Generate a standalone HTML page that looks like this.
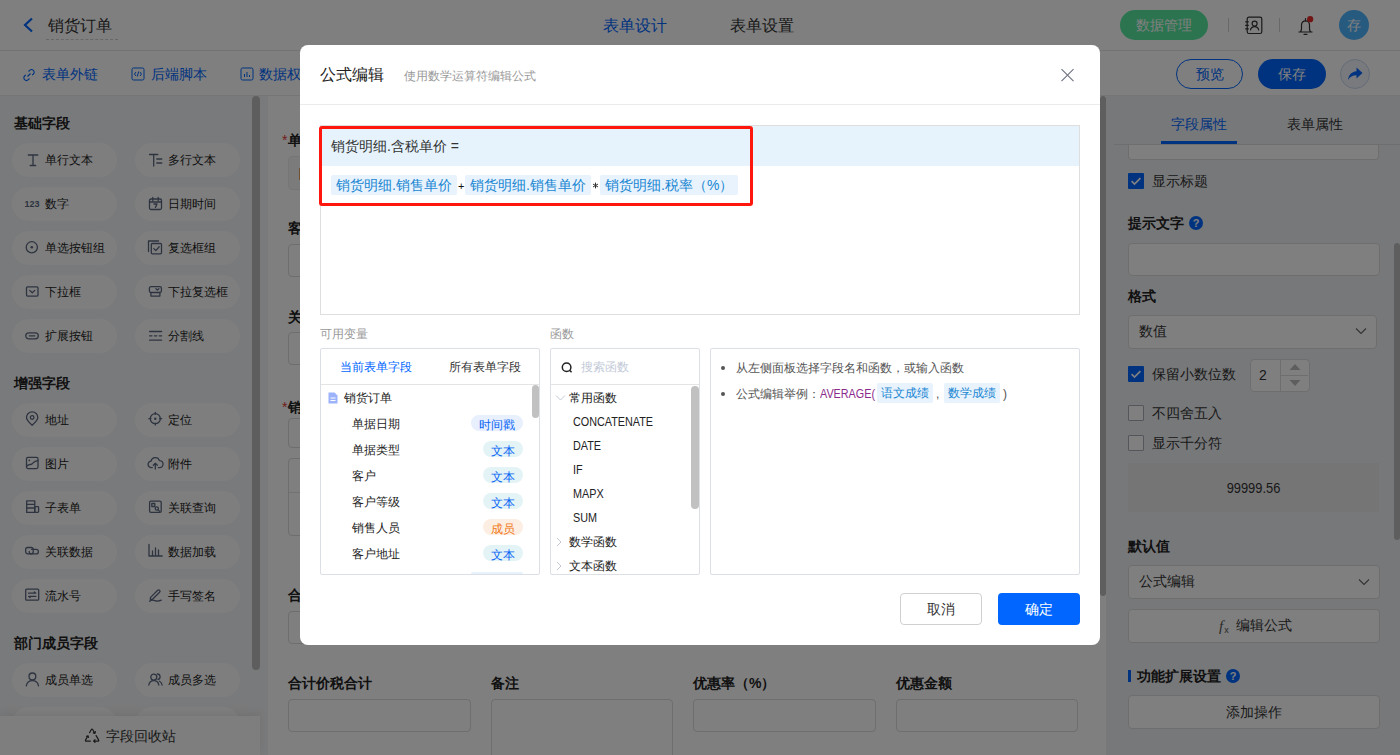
<!DOCTYPE html>
<html><head><meta charset="utf-8">
<style>
*{box-sizing:border-box;margin:0;padding:0}
html,body{width:1400px;height:755px;overflow:hidden;background:#fff;font-family:"Liberation Sans",sans-serif;color:#333}
.a{position:absolute;white-space:nowrap}
.t12{font-size:12px;line-height:16px}
.t13{font-size:13px;line-height:17px}
.t14{font-size:14px;line-height:18px}
.t16{font-size:16px;line-height:20px}
.b{font-weight:bold}
#hdr{position:absolute;left:0;top:0;width:1400px;height:51px;background:#fff;border-bottom:1px solid #e6e6e6}
#tb{position:absolute;left:0;top:51px;width:1400px;height:45px;background:#fff;border-bottom:1px solid #ececec}
#lp{position:absolute;left:0;top:96px;width:268px;height:659px;background:#f3f4f6}
#cv{position:absolute;left:268px;top:96px;width:838px;height:659px;background:#fff}
#rp{position:absolute;left:1106px;top:96px;width:294px;height:659px;background:#eff1f4}
.pill{position:absolute;width:105px;height:34px;border-radius:17px;background:#fdfdfd}
.pill svg{position:absolute;left:11px;top:7px}
.pill span{position:absolute;left:33px;top:9px;font-size:12px;line-height:16px;color:#222;white-space:nowrap}
.sec{position:absolute;left:14px;font-size:14px;line-height:18px;font-weight:bold;color:#222;white-space:nowrap}
.inp{position:absolute;border:1px solid #dcdcdc;border-radius:4px;background:#fff}
.lbl{position:absolute;font-size:14px;line-height:18px;font-weight:bold;color:#222;white-space:nowrap}
#ov{position:absolute;left:0;top:0;width:1400px;height:755px;background:rgba(0,0,0,.5)}
#md{position:absolute;left:300px;top:45px;width:800px;height:600px;background:#fff;border-radius:8px}
.tag{position:absolute;height:20px;background:#e8f3fd;color:#1886d2;font-size:14px;line-height:20px;padding:0 5px;border-radius:2px;white-space:nowrap}
.bx{position:absolute;border:1px solid #dcdfe6;border-radius:2px}
.itm{position:absolute;font-size:12px;line-height:16px;color:#222;white-space:nowrap}
.ty{position:absolute;height:16px;border-radius:8px;font-size:12px;line-height:20px;text-align:center;color:#0a66f5;background:#e4f4f6}
.lat{display:inline-block;transform:scaleX(.9);transform-origin:0 50%}
</style></head><body>
<!-- HEADER -->
<div id="hdr">
  <svg class="a" style="left:22px;top:17px" width="12" height="16" viewBox="0 0 12 16"><path d="M10 1.5 L3 8 L10 14.5" fill="none" stroke="#0066ff" stroke-width="2.2"/></svg>
  <div class="a t16" style="left:48px;top:15.5px;color:#333">销货订单</div>
  <div class="a" style="left:46px;top:39px;width:72px;border-top:1px dashed #cfcfcf"></div>
  <div class="a t16" style="left:603px;top:16px;color:#0066ff">表单设计</div>
  <div class="a t16" style="left:730px;top:16px;color:#333">表单设置</div>
  <div class="a" style="left:1120px;top:10px;width:88px;height:30px;border-radius:15px;background:#58e9a0"></div>
  <div class="a t14" style="left:1136px;top:16px;color:#fff">数据管理</div>
  <div class="a" style="left:1228px;top:18px;width:1px;height:14px;background:#d0d0d0"></div>
  <svg class="a" style="left:1244px;top:16px" width="20" height="19" viewBox="0 0 20 19">
    <rect x="3.2" y="1.2" width="14.6" height="16.3" rx="1.8" fill="none" stroke="#333" stroke-width="1.2"/>
    <path d="M1.2 5.8h3.6M1.2 9.3h3.6M1.2 12.8h3.6" stroke="#333" stroke-width="1.2"/>
    <circle cx="10.6" cy="7.6" r="2.5" fill="none" stroke="#333" stroke-width="1.2"/>
    <path d="M6.4 14.3c0.5-2.4 2.2-3.6 4.2-3.6s3.7 1.2 4.2 3.6" fill="none" stroke="#333" stroke-width="1.2"/>
  </svg>
  <div class="a" style="left:1279px;top:18px;width:1px;height:14px;background:#d0d0d0"></div>
  <svg class="a" style="left:1296px;top:15px" width="20" height="21" viewBox="0 0 20 21">
    <path d="M2.5 17h14M4.3 17c.9-1 1.2-2.2 1.2-3.6V9.8a4 4 0 0 1 8 0v3.6c0 1.4.3 2.6 1.2 3.6" fill="none" stroke="#333" stroke-width="1.2" stroke-linejoin="round"/>
    <path d="M9.5 3.5v2.3M8 19.3h3" stroke="#333" stroke-width="1.2" stroke-linecap="round"/>
    <circle cx="14.2" cy="4.2" r="3.1" fill="#e42a2a"/>
  </svg>
  <div class="a" style="left:1339px;top:10px;width:30px;height:30px;border-radius:15px;background:#4fb4ff"></div>
  <div class="a t14" style="left:1347px;top:16px;color:#fff">存</div>
</div>
<!-- TOOLBAR -->
<div id="tb">
  <svg class="a" style="left:22px;top:17px" width="14" height="14" viewBox="0 0 14 14"><path d="M5.5 8.5l3-3M6.5 3.5l1.2-1.2a2.6 2.6 0 0 1 3.7 3.7l-1.2 1.2M7.5 10.5l-1.2 1.2a2.6 2.6 0 0 1-3.7-3.7l1.2-1.2" fill="none" stroke="#0066ff" stroke-width="1.1"/></svg>
  <div class="a t14" style="left:42px;top:14px;color:#0066ff">表单外链</div>
  <svg class="a" style="left:131px;top:16px" width="14" height="14" viewBox="0 0 14 14"><rect x="1" y="1" width="12" height="12" rx="1.5" fill="none" stroke="#0066ff" stroke-width="1"/><path d="M5 5L3.5 7 5 9M9 5l1.5 2L9 9M7.7 4.5L6.3 9.5" fill="none" stroke="#0066ff" stroke-width="1"/></svg>
  <div class="a t14" style="left:151px;top:14px;color:#0066ff">后端脚本</div>
  <svg class="a" style="left:240px;top:16px" width="14" height="14" viewBox="0 0 14 14"><rect x="1" y="1" width="12" height="12" rx="1.5" fill="none" stroke="#0066ff" stroke-width="1"/><path d="M4.5 10V7M7 10V5M9.5 10V8" stroke="#0066ff" stroke-width="1"/></svg>
  <div class="a t14" style="left:259px;top:14px;color:#0066ff">数据权限</div>
  <div class="a" style="left:1176px;top:8px;width:67px;height:30px;border-radius:15px;border:1.5px solid #0066ff"></div>
  <div class="a t14" style="left:1196px;top:14px;color:#0066ff">预览</div>
  <div class="a" style="left:1258px;top:8px;width:68px;height:30px;border-radius:15px;background:#0066ff"></div>
  <div class="a t14" style="left:1278px;top:14px;color:#fff">保存</div>
  <div class="a" style="left:1340px;top:8px;width:30px;height:30px;border-radius:15px;border:1.5px solid #c8d7f0;background:#f1f5fc"></div>
  <svg class="a" style="left:1346px;top:15px" width="18" height="16" viewBox="0 0 18 16"><path d="M10.5 1.5L16.5 7l-6 5.5V9.3C6.5 9.3 4 10.8 2 14c0.6-4.8 3.2-8.2 8.5-8.8z" fill="#0066ff"/></svg>
</div>
<!-- LEFT PANEL -->
<div id="lp"></div>
<div class="sec" style="top:114px">基础字段</div>
<div class="pill" style="left:12px;top:143px"><svg width="18" height="18" viewBox="0 0 18 18"><path d="M5.3 5h9.5M7.2 15.5h5.5M10 5v10.5" fill="none" stroke="#5a6880" stroke-width="1.3" stroke-linecap="round" stroke-linejoin="round" stroke-width="1.4"/></svg><span>单行文本</span></div>
<div class="pill" style="left:135px;top:143px"><svg width="18" height="18" viewBox="0 0 18 18"><path d="M3.5 4.5h8.3M7.7 4.5v11.5M10.8 9h5M10.8 13h5" fill="none" stroke="#5a6880" stroke-width="1.3" stroke-linecap="round" stroke-linejoin="round"/></svg><span>多行文本</span></div>
<div class="pill" style="left:12px;top:187px"><svg width="18" height="18" viewBox="0 0 18 18"><text x="1.6" y="12.7" font-size="9.6" font-weight="bold" fill="#5a6880" font-family="Liberation Sans" textLength="15" lengthAdjust="spacingAndGlyphs">123</text></svg><span>数字</span></div>
<div class="pill" style="left:135px;top:187px"><svg width="18" height="18" viewBox="0 0 18 18"><rect x="3.5" y="5" width="12" height="10.5" rx="1.5" fill="none" stroke="#5a6880" stroke-width="1.3" stroke-linecap="round" stroke-linejoin="round"/><path d="M3.5 8h12M6.8 3.5v3M12.2 3.5v3M8 10h3l-1.6 3.5" fill="none" stroke="#5a6880" stroke-width="1.3" stroke-linecap="round" stroke-linejoin="round" stroke-width="1.2"/></svg><span>日期时间</span></div>
<div class="pill" style="left:12px;top:231px"><svg width="18" height="18" viewBox="0 0 18 18"><circle cx="8.8" cy="9.3" r="5.6" fill="none" stroke="#5a6880" stroke-width="1.3" stroke-linecap="round" stroke-linejoin="round"/><circle cx="8.8" cy="9.3" r="1.3" fill="#5a6880"/></svg><span>单选按钮组</span></div>
<div class="pill" style="left:135px;top:231px"><svg width="18" height="18" viewBox="0 0 18 18"><path d="M2.5 13.5V3h10" fill="none" stroke="#5a6880" stroke-width="1.3" stroke-linecap="round" stroke-linejoin="round"/><rect x="5.3" y="5.5" width="10.2" height="10.3" rx="1" fill="none" stroke="#5a6880" stroke-width="1.3" stroke-linecap="round" stroke-linejoin="round"/><path d="M7.8 10.6l2 2 3.4-3.8" fill="none" stroke="#5a6880" stroke-width="1.3" stroke-linecap="round" stroke-linejoin="round"/></svg><span>复选框组</span></div>
<div class="pill" style="left:12px;top:275px"><svg width="18" height="18" viewBox="0 0 18 18"><rect x="3.5" y="4.9" width="11.5" height="9.2" rx="1" fill="none" stroke="#5a6880" stroke-width="1.3" stroke-linecap="round" stroke-linejoin="round"/><path d="M6.7 8.4l2.55 2.4 2.55-2.4" fill="none" stroke="#5a6880" stroke-width="1.3" stroke-linecap="round" stroke-linejoin="round"/></svg><span>下拉框</span></div>
<div class="pill" style="left:135px;top:275px"><svg width="18" height="18" viewBox="0 0 18 18"><rect x="3.4" y="4.7" width="12" height="5.8" rx="1.5" fill="none" stroke="#5a6880" stroke-width="1.3" stroke-linecap="round" stroke-linejoin="round"/><path d="M4.9 10.5v3.6h9v-3.6" fill="none" stroke="#5a6880" stroke-width="1.3" stroke-linecap="round" stroke-linejoin="round"/><path d="M9.9 6.8l1.5 1.3 1.5-1.3" fill="none" stroke="#5a6880" stroke-width="1.3" stroke-linecap="round" stroke-linejoin="round"/></svg><span>下拉复选框</span></div>
<div class="pill" style="left:12px;top:319px"><svg width="18" height="18" viewBox="0 0 18 18"><rect x="2.8" y="6.9" width="12.5" height="5.9" rx="2.95" fill="none" stroke="#5a6880" stroke-width="1.3" stroke-linecap="round" stroke-linejoin="round"/><path d="M6.3 9.85h5.5" fill="none" stroke="#5a6880" stroke-width="1.3" stroke-linecap="round" stroke-linejoin="round"/></svg><span>扩展按钮</span></div>
<div class="pill" style="left:135px;top:319px"><svg width="18" height="18" viewBox="0 0 18 18"><path d="M3.6 5.5h12M3.6 14.2h12M3.6 9.8h2.4M8.4 9.8h2.4M13.2 9.8h2.4" fill="none" stroke="#5a6880" stroke-width="1.3" stroke-linecap="round" stroke-linejoin="round"/></svg><span>分割线</span></div>
<div class="sec" style="top:374px">增强字段</div>
<div class="pill" style="left:12px;top:403px"><svg width="18" height="18" viewBox="0 0 18 18"><path d="M9.15 15.2C7 13.3 3.5 10.2 3.5 7.5a5.65 5.65 0 0 1 11.3 0c0 2.7-3.5 5.8-5.65 7.7z" fill="none" stroke="#5a6880" stroke-width="1.3" stroke-linecap="round" stroke-linejoin="round"/><circle cx="9.15" cy="7.5" r="1.8" fill="none" stroke="#5a6880" stroke-width="1.3" stroke-linecap="round" stroke-linejoin="round"/></svg><span>地址</span></div>
<div class="pill" style="left:135px;top:403px"><svg width="18" height="18" viewBox="0 0 18 18"><circle cx="9.3" cy="8.7" r="5" fill="none" stroke="#5a6880" stroke-width="1.3" stroke-linecap="round" stroke-linejoin="round"/><circle cx="9.3" cy="8.7" r="1.2" fill="#5a6880"/><path d="M9.3 2.3v2M9.3 13.1v2M2.9 8.7h2M13.7 8.7h2" fill="none" stroke="#5a6880" stroke-width="1.3" stroke-linecap="round" stroke-linejoin="round"/></svg><span>定位</span></div>
<div class="pill" style="left:12px;top:447px"><svg width="18" height="18" viewBox="0 0 18 18"><rect x="3.5" y="3.3" width="11.5" height="11.3" rx="1.5" fill="none" stroke="#5a6880" stroke-width="1.3" stroke-linecap="round" stroke-linejoin="round"/><path d="M3.8 12.3c1.5-2.8 3.6-1 5.4-2.6 1.3-1.2 2.2-2.7 5.6-3" fill="none" stroke="#5a6880" stroke-width="1.3" stroke-linecap="round" stroke-linejoin="round" stroke-width="1.2"/><circle cx="6.3" cy="6.3" r="0.9" fill="#5a6880"/></svg><span>图片</span></div>
<div class="pill" style="left:135px;top:447px"><svg width="18" height="18" viewBox="0 0 18 18"><path d="M6.3 13.6H5.5a3.2 3.2 0 0 1-.4-6.4 4.3 4.3 0 0 1 8.3-.6 3.5 3.5 0 0 1 .3 7H12.3" fill="none" stroke="#5a6880" stroke-width="1.3" stroke-linecap="round" stroke-linejoin="round"/><path d="M9.3 15V9.3M7.3 11.2l2-2 2 2" fill="none" stroke="#5a6880" stroke-width="1.3" stroke-linecap="round" stroke-linejoin="round"/></svg><span>附件</span></div>
<div class="pill" style="left:12px;top:491px"><svg width="18" height="18" viewBox="0 0 18 18"><path d="M11.8 14.4H3.7V2.9h8.1v11.5M3.7 6.3h8.1M3.7 10h8.1" fill="none" stroke="#5a6880" stroke-width="1.3" stroke-linecap="round" stroke-linejoin="round" stroke-width="1.3"/><rect x="11.8" y="8.6" width="3.8" height="5.8" rx="0.8" fill="none" stroke="#5a6880" stroke-width="1.3" stroke-linecap="round" stroke-linejoin="round" stroke-width="1.3"/></svg><span>子表单</span></div>
<div class="pill" style="left:135px;top:491px"><svg width="18" height="18" viewBox="0 0 18 18"><rect x="3.6" y="3.2" width="11.6" height="11.2" rx="1.3" fill="none" stroke="#5a6880" stroke-width="1.3" stroke-linecap="round" stroke-linejoin="round" stroke-width="1.4"/><rect x="5.8" y="5.5" width="3" height="3" fill="none" stroke="#5a6880" stroke-width="1.3" stroke-linecap="round" stroke-linejoin="round" stroke-width="1.1"/><circle cx="10.8" cy="10.5" r="1.6" fill="none" stroke="#5a6880" stroke-width="1.3" stroke-linecap="round" stroke-linejoin="round" stroke-width="1.1"/><path d="M12 11.8l1.6 1.6" fill="none" stroke="#5a6880" stroke-width="1.3" stroke-linecap="round" stroke-linejoin="round" stroke-width="1.1"/></svg><span>关联查询</span></div>
<div class="pill" style="left:12px;top:535px"><svg width="18" height="18" viewBox="0 0 18 18"><rect x="2.7" y="5.5" width="7.5" height="6.3" rx="2" fill="none" stroke="#5a6880" stroke-width="1.3" stroke-linecap="round" stroke-linejoin="round"/><path d="M8.5 7.3h4.8a2 2 0 0 1 2 2v.6a2 2 0 0 1-2 2H8.3a2 2 0 0 1-2-2v-.5" fill="none" stroke="#5a6880" stroke-width="1.3" stroke-linecap="round" stroke-linejoin="round"/></svg><span>关联数据</span></div>
<div class="pill" style="left:135px;top:535px"><svg width="18" height="18" viewBox="0 0 18 18"><path d="M3 2.5V14h13.2M6.5 9v5M9.5 6v8M12.5 8v6" fill="none" stroke="#5a6880" stroke-width="1.3" stroke-linecap="round" stroke-linejoin="round" stroke-width="1.4"/></svg><span>数据加载</span></div>
<div class="pill" style="left:12px;top:579px"><svg width="18" height="18" viewBox="0 0 18 18"><rect x="2.7" y="3.2" width="13" height="11" rx="1" fill="none" stroke="#5a6880" stroke-width="1.3" stroke-linecap="round" stroke-linejoin="round" stroke-width="1.4"/><path d="M5.5 7.2h7.3l-1.5-1.3M12.9 10.3H5.6l1.5 1.3" fill="none" stroke="#5a6880" stroke-width="1.3" stroke-linecap="round" stroke-linejoin="round" stroke-width="1.2"/></svg><span>流水号</span></div>
<div class="pill" style="left:135px;top:579px"><svg width="18" height="18" viewBox="0 0 18 18"><path d="M4.4 11.6l7.3-7.3a1.3 1.3 0 0 1 1.9 1.9l-7.3 7.3H4.4z" fill="none" stroke="#5a6880" stroke-width="1.3" stroke-linecap="round" stroke-linejoin="round" stroke-width="1.3"/><path d="M3.5 15.2c2-1.4 3.5-1.4 5.5-.6s3.5.8 6.3-.4" fill="none" stroke="#5a6880" stroke-width="1.3" stroke-linecap="round" stroke-linejoin="round" stroke-width="1.3"/></svg><span>手写签名</span></div>
<div class="sec" style="top:634px">部门成员字段</div>
<div class="pill" style="left:12px;top:663px"><svg width="18" height="18" viewBox="0 0 18 18"><circle cx="9.4" cy="6.4" r="3.4" fill="none" stroke="#5a6880" stroke-width="1.3" stroke-linecap="round" stroke-linejoin="round"/><path d="M3.3 15.8c.6-3.3 3-5.2 6.1-5.2s5.5 1.9 6.1 5.2" fill="none" stroke="#5a6880" stroke-width="1.3" stroke-linecap="round" stroke-linejoin="round"/></svg><span>成员单选</span></div>
<div class="pill" style="left:135px;top:663px"><svg width="18" height="18" viewBox="0 0 18 18"><circle cx="7.8" cy="7.1" r="3" fill="none" stroke="#5a6880" stroke-width="1.3" stroke-linecap="round" stroke-linejoin="round"/><path d="M2.8 15c.5-2.9 2.5-4.4 5-4.4s4.5 1.5 5 4.4M11.4 4a2.8 2.8 0 0 1 .6 5.5M13.5 11.2c1.3.7 2.3 2 2.6 3.8" fill="none" stroke="#5a6880" stroke-width="1.3" stroke-linecap="round" stroke-linejoin="round"/></svg><span>成员多选</span></div>
<div class="pill" style="left:12px;top:707px"><svg width="18" height="18" viewBox="0 0 18 18"><circle cx="9.4" cy="6.4" r="3.4" fill="none" stroke="#5a6880" stroke-width="1.3" stroke-linecap="round" stroke-linejoin="round"/><path d="M3.3 15.8c.6-3.3 3-5.2 6.1-5.2s5.5 1.9 6.1 5.2" fill="none" stroke="#5a6880" stroke-width="1.3" stroke-linecap="round" stroke-linejoin="round"/></svg><span>成员</span></div>
<div class="pill" style="left:135px;top:707px"><svg width="18" height="18" viewBox="0 0 18 18"><circle cx="7.8" cy="7.1" r="3" fill="none" stroke="#5a6880" stroke-width="1.3" stroke-linecap="round" stroke-linejoin="round"/><path d="M2.8 15c.5-2.9 2.5-4.4 5-4.4s4.5 1.5 5 4.4M11.4 4a2.8 2.8 0 0 1 .6 5.5M13.5 11.2c1.3.7 2.3 2 2.6 3.8" fill="none" stroke="#5a6880" stroke-width="1.3" stroke-linecap="round" stroke-linejoin="round"/></svg><span>部门</span></div>
<div class="a" style="left:252px;top:96px;width:8px;height:574px;border-radius:4px;background:#bdbdbd"></div>
<div class="a" style="left:0;top:716px;width:260px;height:39px;background:#fdfdfd;box-shadow:0 -3px 8px rgba(0,0,0,.07)"></div>
<svg class="a" style="left:84px;top:727px" width="16" height="16" viewBox="0 0 16 16"><path d="M5.6 5.6L7.2 2.8Q8 1.6 8.8 2.8L10.9 6.4M9.3 5.9l1.6.5.5-1.7M12.1 8.6l2.5 4.3q.6 1.2-.8 1.2H9.6M11 12.6l-1.4 1.5 1.4 1.3M6.4 14.1H2.4Q1 14.1 1.6 12.9L4 8.8M2.6 9.3l1.4-.5.5 1.6" fill="none" stroke="#333" stroke-width="1.2" stroke-linecap="round" stroke-linejoin="round"/></svg>
<div class="a t14" style="left:106px;top:727px;color:#333">字段回收站</div>
<!-- CANVAS -->
<div id="cv"></div>
<div class="lbl" style="left:288px;top:131px"><span style="color:#e53935;position:absolute;left:-6px;font-weight:normal">*</span>单据日期</div>
<div class="inp" style="left:288px;top:156px;width:183px;height:34px;background:#f7f7f7;border-color:#ececec"></div>
<div class="a" style="left:299px;top:168px;width:1px;height:12px;background:#e0a060"></div>
<div class="lbl" style="left:288px;top:219px">客户</div>
<div class="inp" style="left:288px;top:244px;width:183px;height:33px"></div>
<div class="lbl" style="left:288px;top:308px">关联</div>
<div class="inp" style="left:288px;top:332px;width:183px;height:33px"></div>
<div class="lbl" style="left:288px;top:398px"><span style="color:#e53935;position:absolute;left:-6px;font-weight:normal">*</span>销货明细</div>
<div class="inp" style="left:288px;top:418px;width:100px;height:30px"></div>
<div class="inp" style="left:288px;top:458px;width:790px;height:78px;border-radius:4px"></div>
<div class="a" style="left:289px;top:492px;width:788px;height:1px;background:#e6e6e6"></div>
<div class="lbl" style="left:288px;top:586px">合计金额</div>
<div class="inp" style="left:288px;top:611px;width:183px;height:33px"></div>
<div class="lbl" style="left:288px;top:674px">合计价税合计</div>
<div class="inp" style="left:288px;top:699px;width:183px;height:33px"></div>
<div class="lbl" style="left:491px;top:674px">备注</div>
<div class="inp" style="left:491px;top:699px;width:182px;height:80px"></div>
<div class="lbl" style="left:693px;top:674px">优惠率（%）</div>
<div class="inp" style="left:693px;top:699px;width:183px;height:33px"></div>
<div class="lbl" style="left:896px;top:674px">优惠金额</div>
<div class="inp" style="left:896px;top:699px;width:182px;height:33px"></div>
<div class="a" style="left:1100px;top:96px;width:6px;height:500px;border-radius:3px;background:#bdbdbd"></div>
<!-- RIGHT PANEL -->
<div id="rp"></div>
<div class="inp" style="left:1128px;top:128px;width:251px;height:32px;border-top:none;border-radius:0 0 4px 4px"></div>
<div class="a" style="left:1114px;top:96px;width:286px;height:48px;background:#eff1f4"></div>
<div class="a t14" style="left:1171px;top:115px;color:#0066ff">字段属性</div>
<div class="a t14" style="left:1287px;top:115px;color:#333">表单属性</div>
<div class="a" style="left:1114px;top:144px;width:286px;height:1px;background:#dcdcdc"></div>
<div class="a" style="left:1161px;top:141px;width:76px;height:3px;background:#0066ff"></div>
<!-- checkbox checked -->
<div class="a" style="left:1128px;top:173px;width:16px;height:16px;border-radius:1px;background:#0066ff"></div>
<svg class="a" style="left:1128px;top:173px" width="16" height="16" viewBox="0 0 16 16"><path d="M3.6 8.2l2.9 2.9 5.9-6" fill="none" stroke="#fff" stroke-width="1.7"/></svg>
<div class="a t14" style="left:1152px;top:172px">显示标题</div>
<div class="lbl" style="left:1128px;top:214px">提示文字</div>
<div class="a" style="left:1189px;top:216px;width:14px;height:14px;border-radius:7px;background:#0066ff;color:#fff;font-size:11px;line-height:14px;text-align:center;font-weight:bold">?</div>
<div class="inp" style="left:1128px;top:243px;width:252px;height:33px"></div>
<div class="lbl" style="left:1128px;top:287px">格式</div>
<div class="inp" style="left:1128px;top:315px;width:249px;height:34px"></div>
<div class="a t14" style="left:1139px;top:322px">数值</div>
<svg class="a" style="left:1355px;top:327px" width="12" height="8" viewBox="0 0 12 8"><path d="M1 1.5l5 5 5-5" fill="none" stroke="#666" stroke-width="1.1"/></svg>
<div class="a" style="left:1128px;top:366px;width:16px;height:16px;border-radius:1px;background:#0066ff"></div>
<svg class="a" style="left:1128px;top:366px" width="16" height="16" viewBox="0 0 16 16"><path d="M3.6 8.2l2.9 2.9 5.9-6" fill="none" stroke="#fff" stroke-width="1.7"/></svg>
<div class="a t14" style="left:1152px;top:365px">保留小数位数</div>
<div class="inp" style="left:1250px;top:359px;width:60px;height:33px"></div>
<div class="a" style="left:1280px;top:360px;width:1px;height:31px;background:#dcdcdc"></div>
<div class="a" style="left:1281px;top:375px;width:27px;height:1px;background:#dcdcdc"></div>
<svg class="a" style="left:1288px;top:362px" width="14" height="26" viewBox="0 0 14 26"><path d="M1.5 8l5.5-6 5.5 6z M1.5 18l5.5 6 5.5-6z" fill="#bdbdbd"/></svg>
<div class="a t14" style="left:1259px;top:366px">2</div>
<div class="a" style="left:1128px;top:405px;width:16px;height:16px;border-radius:1px;border:1px solid #a9adb6;background:#fff"></div>
<div class="a t14" style="left:1152px;top:404px">不四舍五入</div>
<div class="a" style="left:1128px;top:435px;width:16px;height:16px;border-radius:1px;border:1px solid #a9adb6;background:#fff"></div>
<div class="a t14" style="left:1152px;top:434px">显示千分符</div>
<div class="a" style="left:1128px;top:463px;width:251px;height:49px;background:#ebebed"></div>
<div class="a t14" style="left:1128px;top:479px;width:251px;text-align:center;transform:scaleX(.92)">99999.56</div>
<div class="lbl" style="left:1128px;top:537px">默认值</div>
<div class="inp" style="left:1128px;top:565px;width:252px;height:34px"></div>
<div class="a t14" style="left:1139px;top:572px">公式编辑</div>
<svg class="a" style="left:1358px;top:578px" width="12" height="8" viewBox="0 0 12 8"><path d="M1 1.5l5 5 5-5" fill="none" stroke="#666" stroke-width="1.1"/></svg>
<div class="inp" style="left:1128px;top:609px;width:252px;height:34px"></div>
<div class="a" style="left:1219px;top:616px;font-family:'Liberation Serif',serif;font-style:italic;font-size:15px;line-height:20px;color:#555">f<span style="font-size:9px;font-style:normal;font-family:'Liberation Sans';position:relative;top:2px;left:1px">x</span></div>
<div class="a t14" style="left:1236px;top:616px">编辑公式</div>
<div class="a" style="left:1128px;top:670px;width:3px;height:12px;background:#0066ff"></div>
<div class="lbl" style="left:1137px;top:667px">功能扩展设置</div>
<div class="a" style="left:1226px;top:669px;width:14px;height:14px;border-radius:7px;background:#0066ff;color:#fff;font-size:11px;line-height:14px;text-align:center;font-weight:bold">?</div>
<div class="inp" style="left:1128px;top:695px;width:252px;height:34px"></div>
<div class="a t14" style="left:1128px;top:703px;width:251px;text-align:center">添加操作</div>
<div class="a" style="left:1394px;top:243px;width:6px;height:297px;border-radius:3px;background:#bdbdbd"></div>
<!-- OVERLAY -->
<div id="ov"></div>
<!-- MODAL -->
<div id="md"></div>
<div class="a t16" style="left:320px;top:65px;color:#222">公式编辑</div>
<div class="a t12" style="left:404px;top:68px;color:#999">使用数学运算符编辑公式</div>
<svg class="a" style="left:1060px;top:68px" width="15" height="15" viewBox="0 0 15 15"><path d="M1.5 1.2l12 11.9M13.5 1.2l-12 11.9" stroke="#6f7480" stroke-width="1.15"/></svg>
<div class="a" style="left:300px;top:104px;width:800px;height:1px;background:#ebebeb"></div>
<!-- editor -->
<div class="bx" style="left:320px;top:125px;width:760px;height:190px;border-color:#dedede;border-radius:0"></div>
<div class="a" style="left:321px;top:126px;width:758px;height:40px;background:#e6f3fd"></div>
<div class="a t14" style="left:331px;top:137px;color:#333">销货明细.含税单价 =</div>
<div class="tag" style="left:331px;top:175px">销货明细.销售单价</div>
<div class="a" style="left:458px;top:179px;color:#111;font-size:11px;line-height:14px">+</div>
<div class="tag" style="left:465px;top:175px">销货明细.销售单价</div>
<svg class="a" style="left:592px;top:182px" width="7" height="7" viewBox="0 0 7 7"><path d="M3.5 0.6v5.8M1 2.05l5 2.9M1 4.95l5-2.9" stroke="#333" stroke-width="1"/></svg>
<div class="tag" style="left:600px;top:175px">销货明细.税率（%）</div>
<div class="a" style="left:319px;top:126px;width:434px;height:80px;border:3px solid #ff160c;border-radius:3px"></div>
<!-- labels -->
<div class="a t12" style="left:320px;top:326px;color:#999">可用变量</div>
<div class="a t12" style="left:550px;top:326px;color:#999">函数</div>
<!-- vars box -->
<div class="bx" style="left:320px;top:348px;width:220px;height:227px"></div>
<div class="a" style="left:321px;top:384px;width:218px;height:1px;background:#e4e4e4"></div>
<div class="a t12" style="left:340px;top:359px;color:#0066ff">当前表单字段</div>
<div class="a t12" style="left:449px;top:359px;color:#333">所有表单字段</div>
<svg class="a" style="left:328px;top:392px" width="10" height="12" viewBox="0 0 10 12"><path d="M0.5 0.5h6l3 3v8h-9z" fill="#9cb2fb"/><path d="M2.5 6h5M2.5 8.5h5" stroke="#fff" stroke-width="1"/></svg>
<div class="itm" style="left:344px;top:390px">销货订单</div>
<div class="itm" style="left:352px;top:416px">单据日期</div>
<div class="ty" style="left:471px;top:415px;width:52px;background:#e8f0fd">时间戳</div>
<div class="itm" style="left:352px;top:442px">单据类型</div>
<div class="ty" style="left:483px;top:441px;width:40px">文本</div>
<div class="itm" style="left:352px;top:468px">客户</div>
<div class="ty" style="left:483px;top:467px;width:40px">文本</div>
<div class="itm" style="left:352px;top:494px">客户等级</div>
<div class="ty" style="left:483px;top:493px;width:40px">文本</div>
<div class="itm" style="left:352px;top:520px">销售人员</div>
<div class="ty" style="left:483px;top:519px;width:40px;color:#f07a1a;background:#fdeee3">成员</div>
<div class="itm" style="left:352px;top:546px">客户地址</div>
<div class="ty" style="left:483px;top:545px;width:40px">文本</div>
<div class="a" style="left:471px;top:572px;width:52px;height:2px;border-radius:2px 2px 0 0;background:#e6f2fc"></div>
<div class="a" style="left:532px;top:385px;width:7px;height:33px;border-radius:4px;background:#c1c1c1"></div>
<!-- func box -->
<div class="bx" style="left:550px;top:348px;width:150px;height:227px"></div>
<div class="a" style="left:551px;top:384px;width:148px;height:1px;background:#e4e4e4"></div>
<svg class="a" style="left:561px;top:362px" width="13" height="13" viewBox="0 0 13 13"><circle cx="5.6" cy="5.3" r="4.3" fill="none" stroke="#222" stroke-width="1.5"/><path d="M8.6 8.3l2 2" stroke="#222" stroke-width="1.5"/></svg>
<div class="a t12" style="left:581px;top:359px;color:#c3cad8">搜索函数</div>
<svg class="a" style="left:555px;top:394px" width="11" height="8" viewBox="0 0 11 8"><path d="M1 1.5l4.5 4.5 4.5-4.5" fill="none" stroke="#c3c9d5" stroke-width="1"/></svg>
<div class="itm" style="left:569px;top:390px">常用函数</div>
<div class="itm" style="left:573px;top:414px"><span class="lat">CONCATENATE</span></div>
<div class="itm" style="left:573px;top:438px"><span class="lat">DATE</span></div>
<div class="itm" style="left:573px;top:462px"><span class="lat">IF</span></div>
<div class="itm" style="left:573px;top:486px"><span class="lat">MAPX</span></div>
<div class="itm" style="left:573px;top:510px"><span class="lat">SUM</span></div>
<svg class="a" style="left:556px;top:537px" width="6" height="10" viewBox="0 0 6 10"><path d="M1 1l4 4-4 4" fill="none" stroke="#c3c9d5" stroke-width="1"/></svg>
<div class="itm" style="left:569px;top:534px">数学函数</div>
<svg class="a" style="left:556px;top:561px" width="6" height="10" viewBox="0 0 6 10"><path d="M1 1l4 4-4 4" fill="none" stroke="#c3c9d5" stroke-width="1"/></svg>
<div class="itm" style="left:569px;top:558px">文本函数</div>
<div class="a" style="left:691px;top:386px;width:8px;height:123px;border-radius:4px;background:#c1c1c1"></div>
<!-- desc box -->
<div class="bx" style="left:710px;top:348px;width:370px;height:227px"></div>
<div class="a" style="left:721px;top:366px;width:4px;height:4px;border-radius:2px;background:#555"></div>
<div class="itm" style="left:736px;top:360px;color:#555">从左侧面板选择字段名和函数，或输入函数</div>
<div class="a" style="left:721px;top:392px;width:4px;height:4px;border-radius:2px;background:#555"></div>
<div class="itm" style="left:736px;top:386px;color:#555">公式编辑举例：<span class="lat" style="color:#8b2a8b">AVERAGE(</span></div>
<div class="tag" style="left:877px;top:383px;height:20px;font-size:12px;line-height:20px;padding:0 4px">语文成绩</div>
<div class="itm" style="left:936px;top:386px;color:#555">,</div>
<div class="tag" style="left:944px;top:383px;height:20px;font-size:12px;line-height:20px;padding:0 4px">数学成绩</div>
<div class="itm" style="left:1003px;top:386px;color:#555">)</div>
<!-- buttons -->
<div class="a" style="left:900px;top:593px;width:82px;height:32px;border:1px solid #d0d0d0;border-radius:4px;background:#fff"></div>
<div class="a t14" style="left:900px;top:600px;width:82px;text-align:center;color:#333">取消</div>
<div class="a" style="left:998px;top:593px;width:82px;height:32px;border-radius:4px;background:#0066ff"></div>
<div class="a t14" style="left:998px;top:600px;width:82px;text-align:center;color:#fff">确定</div>
</body></html>
